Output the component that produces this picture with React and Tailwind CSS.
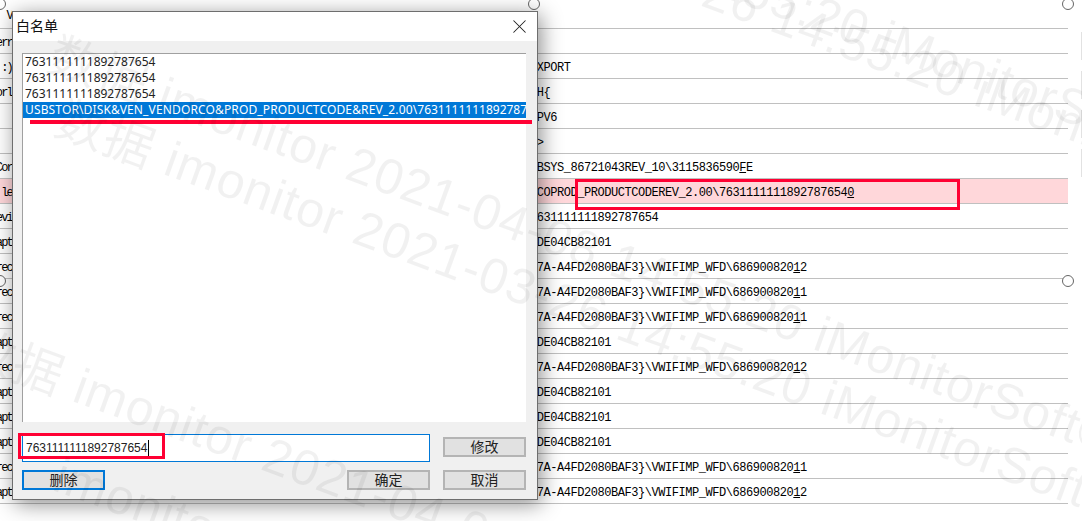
import React from 'react';
import { X } from 'lucide-react';

const wifi = 'F7A-A4FD2080BAF3}\\VWIFIMP_WFD\\686900820';
const adapter = '0DE04CB82101';

// mark is the one character the old grid drew with an underline
const rows = [
    { left: 'V', value: '', h: 'h-[29px]' },
    { left: 'err', value: '' },
    { left: ':)', value: 'EXPORT' },
    { left: 'orl', value: '0H{' },
    { left: '', value: '0PV6' },
    { left: '', value: '0>' },
    { left: 'Cor', value: '0BSYS_86721043REV_10\\3115836590', mark: 'F', tail: 'E' },
    { left: 'le', value: 'XCOPROD_PRODUCTCODEREV_2.00\\7631111111892787654', mark: '0', pink: true },
    { left: 'evi', value: '7631111111892787654' },
    { left: 'apt', value: adapter },
    { left: 'rec', value: wifi, mark: '1', tail: '2' },
    { left: 'rec', value: wifi, mark: '1', tail: '1' },
    { left: 'rec', value: wifi, mark: '1', tail: '1' },
    { left: 'apt', value: adapter },
    { left: 'rec', value: wifi, mark: '1', tail: '2' },
    { left: 'apt', value: adapter },
    { left: 'apt', value: adapter },
    { left: 'apt', value: adapter },
    { left: 'rec', value: wifi, mark: '1', tail: '1' },
    { left: 'apt', value: wifi, mark: '1', tail: '2' },
];

const Handle = ({ className }) => (
    <div className={`absolute w-3 h-3 rounded-full bg-white border border-[#666] ${className}`}></div>
);

const DialogButton = ({ label, className = 'border-[#b4b4b4]' }) => (
    <button className={`w-[83px] h-[20px] shrink-0 bg-[#e1e1e1] border-2 text-[14px] leading-none text-[#222] ${className}`}>
        {label}
    </button>
);

const Watermarks = () => (
    <div className="absolute inset-0 overflow-hidden pointer-events-none font-['Liberation_Sans','Noto_Sans_CJK_SC',sans-serif] text-[50px] leading-none tracking-[1px] text-black/[0.055] whitespace-pre z-20">
        <div className="absolute left-[686px] top-[-61px] rotate-[20deg] origin-top-left">14:55:20 iMonitorSoft® demo</div>
        <div className="absolute left-[643px] top-[-60px] rotate-[20deg] origin-top-left">03-26 14:55:20 iMonitorSoft® demo</div>
        <div className="absolute left-[59px] top-[30px] rotate-[20deg] origin-top-left">数据 imonitor 2021-04-08 14:55:20 iMonitorSoft® demo</div>
        <div className="absolute left-[66px] top-[94px] rotate-[20deg] origin-top-left">数据 imonitor 2021-03-26 14:55:20 iMonitorSoft® demo</div>
        <div className="absolute left-[-25px] top-[321px] rotate-[20deg] origin-top-left">数据 imonitor 2021-04-08 14:55:20</div>
        <div className="absolute left-[65px] top-[450px] rotate-[20deg] origin-top-left">imonitor 2021-04-08</div>
    </div>
);

const App = () => {
    return (
        <div className="relative w-[1082px] h-[521px] overflow-hidden bg-white">
            {/* table behind the dialog */}
            <div className="w-[1068px] font-['Liberation_Mono',monospace] text-[12px] tracking-[-0.45px] text-black">
                {rows.map((row, i) => (
                    <div
                        key={i}
                        className={`flex items-center h-[25px] pt-[4px] border-b border-[#c0c0c0] ${row.h || ''} ${row.pink ? 'bg-[#ffd7da]' : ''}`}
                    >
                        <div className="w-[12px] flex justify-end overflow-hidden whitespace-nowrap tracking-[-1.8px]">{row.left}</div>
                        <div className="ml-[518px] whitespace-pre">
                            {row.value}
                            {row.mark && <span className="underline">{row.mark}</span>}
                            {row.tail}
                        </div>
                    </div>
                ))}
            </div>

            <Handle className="left-[-6px] top-[-2px]" />
            <Handle className="left-[528px] top-[-2px]" />
            <Handle className="left-[1062px] top-[-2px]" />
            <Handle className="left-[-6px] top-[275px]" />
            <Handle className="left-[1062px] top-[275px]" />
            <div className="absolute left-[1081px] top-[32px] w-px h-[150px] bg-[repeating-linear-gradient(to_bottom,#e2e2e2_0,#e2e2e2_28px,transparent_28px,transparent_39px)]"></div>

            {/* dialog */}
            <div className="absolute left-[12px] top-[11px] w-[526px] h-[489px] flex flex-col bg-[#f0f0f0] border border-[#6e6e6e] shadow-[3px_4px_20px_rgba(0,0,0,0.45)] font-['Liberation_Sans','Noto_Sans_CJK_SC',sans-serif] z-10">
                <div className="flex items-center justify-between h-[29px] shrink-0 bg-white pl-[3px] pr-[6px]">
                    <span className="mb-[3px] font-['Noto_Sans_CJK_SC',sans-serif] text-[14px] text-[#111]">白名单</span>
                    <X size={23} strokeWidth={1.1} color="#222" />
                </div>
                <div className="flex-1 flex flex-col pl-[9px] pr-[11px] pt-[12px]">
                    <div className="h-[369px] shrink-0 bg-white border-t border-l border-[#a0a0a0] font-['Noto_Sans',sans-serif] text-[12px] leading-[16px] text-[#222] overflow-hidden">
                        <div className="pl-[2px]">7631111111892787654</div>
                        <div className="pl-[2px]">7631111111892787654</div>
                        <div className="pl-[2px]">7631111111892787654</div>
                        <div className="pl-[2px] bg-[#0078d7] text-white whitespace-nowrap overflow-hidden">
                            <span className="tracking-[0.14px]">USBSTOR\DISK&amp;VEN_VENDORCO&amp;PROD_PRODUCTCODE&amp;REV_2.00\</span>
                            76311111118927876540
                        </div>
                    </div>
                    <div className="flex mt-[12px] gap-[13px]">
                        <div className="w-[408px] h-[28px] flex items-center bg-white border border-[#0078d7] pl-[3px] text-[12px] text-[#222]">
                            <span>7631111111892787654</span>
                            <span className="ml-px w-px h-[16px] bg-black"></span>
                        </div>
                        <DialogButton label="修改" className="mt-[3px] border-[#b4b4b4]" />
                    </div>
                    <div className="flex items-center mt-[8px]">
                        <DialogButton label="删除" className="border-[#0078d7]" />
                        <DialogButton label="确定" className="ml-auto border-[#b4b4b4]" />
                        <DialogButton label="取消" className="ml-[13px] border-[#b4b4b4]" />
                    </div>
                </div>
            </div>

            {/* red annotations */}
            <div className="absolute left-[30px] top-[120px] w-[502px] h-[4px] bg-[#ff0033] z-10"></div>
            <div className="absolute left-[18px] top-[433px] w-[147px] h-[26px] border-[3px] border-[#ff0033] z-10"></div>
            <div className="absolute left-[575px] top-[179px] w-[385px] h-[31px] border-[3px] border-[#ff0033] z-10"></div>

            <Watermarks />
        </div>
    );
};

export default App;
